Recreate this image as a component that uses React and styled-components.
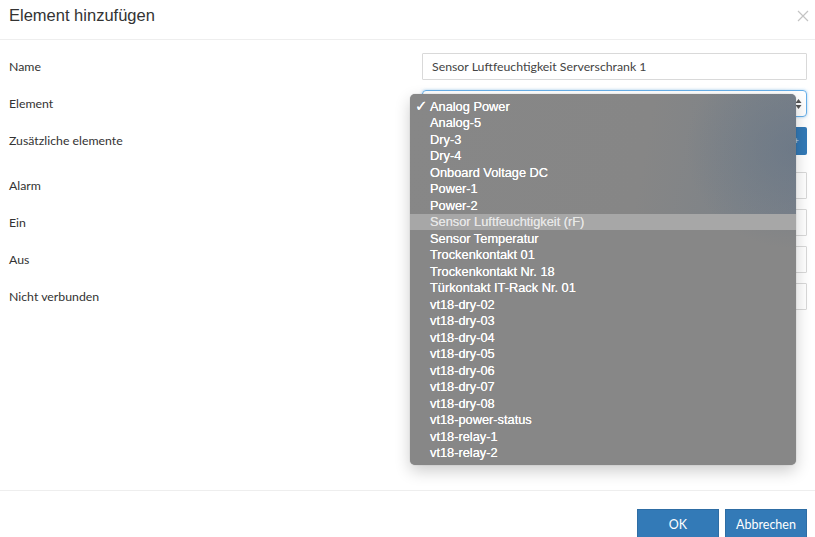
import React from "react";
import styled, { createGlobalStyle } from "styled-components";

const GlobalStyle = createGlobalStyle`
  html, body {
    margin: 0;
    padding: 0;
    background: #fff;
  }
  body {
    font-family: Lato, "Open Sans", sans-serif;
    color: #333;
    overflow: hidden;
  }
`;

const OPTIONS = [
  "Analog Power",
  "Analog-5",
  "Dry-3",
  "Dry-4",
  "Onboard Voltage DC",
  "Power-1",
  "Power-2",
  "Sensor Luftfeuchtigkeit (rF)",
  "Sensor Temperatur",
  "Trockenkontakt 01",
  "Trockenkontakt Nr. 18",
  "Türkontakt IT-Rack Nr. 01",
  "vt18-dry-02",
  "vt18-dry-03",
  "vt18-dry-04",
  "vt18-dry-05",
  "vt18-dry-06",
  "vt18-dry-07",
  "vt18-dry-08",
  "vt18-power-status",
  "vt18-relay-1",
  "vt18-relay-2",
];

const App = () => {
  return (
    <>
      <GlobalStyle />
      <Modal>
        <Header>
          <Title>Element hinzufügen</Title>
          <Close aria-label="close">
            <svg width="12" height="12" viewBox="0 0 12 12">
              <path d="M1 1 L11 11 M11 1 L1 11" stroke="#c4c4c4" strokeWidth="1.2" />
            </svg>
          </Close>
        </Header>

        <Body>
          <Row>
            <Label>Name</Label>
            <Input defaultValue="Sensor Luftfeuchtigkeit Serverschrank 1" />
          </Row>
          <Row>
            <Label>Element</Label>
            <Select $focused>
              <SelectValue>Analog Power</SelectValue>
              <Arrows>
                <svg width="7" height="12" viewBox="0 0 7 12">
                  <path d="M0.5 5 L3.5 1 L6.5 5 Z M0.5 7 L3.5 11 L6.5 7 Z" fill="#555" />
                </svg>
              </Arrows>
            </Select>
          </Row>
          <Row $gap={18}>
            <Label>Zusätzliche elemente</Label>
            <BlueBar>
              <span>+</span>
            </BlueBar>
          </Row>
          <Row>
            <Label>Alarm</Label>
            <Input />
          </Row>
          <Row>
            <Label>Ein</Label>
            <Input />
          </Row>
          <Row>
            <Label>Aus</Label>
            <Input />
          </Row>
          <Row>
            <Label>Nicht verbunden</Label>
            <Input />
          </Row>

          {/* native select popup, drawn open over the form */}
          <Menu>
            {OPTIONS.map((opt, i) => (
              <MenuItem key={opt} $active={i === 7}>
                <Check>{i === 0 ? "✓" : ""}</Check>
                {opt}
              </MenuItem>
            ))}
          </Menu>
        </Body>

        <Footer>
          <Button>OK</Button>
          <Button>Abbrechen</Button>
        </Footer>
      </Modal>
    </>
  );
};

const Modal = styled.div`
  width: 815px;
  height: 537px;
  display: flex;
  flex-direction: column;
  position: relative;
  overflow: hidden;
`;

const Header = styled.div`
  height: 40px;
  box-sizing: border-box;
  border-bottom: 1px solid #eeeeee;
  display: flex;
  align-items: flex-start;
  justify-content: space-between;
  padding: 5px 9px 0 9px;
`;

const Title = styled.h4`
  margin: 0;
  font-family: "Liberation Sans", Arial, sans-serif;
  font-size: 16.5px;
  font-weight: normal;
  line-height: 20px;
  color: #333;
`;

const Close = styled.div`
  margin-top: 1px;
  margin-right: -3px;
  width: 12px;
  height: 12px;
`;

const Body = styled.div`
  flex: 1;
  padding: 13px 8px 0 9px;
  position: relative;
`;

const Row = styled.div`
  display: flex;
  align-items: center;
  justify-content: space-between;
  height: 27px;
  margin-bottom: ${(p) => p.$gap || 10}px;
`;

const Label = styled.label`
  font-size: 12.3px;
  color: #333;
`;

const Input = styled.input`
  width: 385px;
  height: 27px;
  box-sizing: border-box;
  border: 1px solid #d9d9d9;
  border-radius: 1px;
  padding: 0 9px;
  font-family: Lato, "Open Sans", sans-serif;
  font-size: 12.3px;
  color: #444;
  outline: none;
`;

const Select = styled.div`
  width: 385px;
  height: 27px;
  box-sizing: border-box;
  border: 1px solid ${(p) => (p.$focused ? "#66afe9" : "#d9d9d9")};
  border-radius: 4px;
  box-shadow: ${(p) => (p.$focused ? "0 0 3px rgba(102,175,233,0.6)" : "none")};
  display: flex;
  align-items: center;
  justify-content: space-between;
  padding: 0 4px 0 9px;
  font-size: 12.3px;
`;

const SelectValue = styled.span`
  visibility: hidden;
`;

const Arrows = styled.span`
  display: flex;
  align-items: center;
`;

const BlueBar = styled.div`
  width: 385px;
  height: 28px;
  background: #337ab7;
  border-radius: 2px;
  display: flex;
  align-items: center;
  justify-content: flex-end;
  padding-right: 8px;
  box-sizing: border-box;
  color: #cfe0f0;
  font-size: 9px;
`;

const Menu = styled.ul`
  position: absolute;
  left: 410px;
  top: 54px;
  width: 386px;
  height: 371px;
  box-sizing: border-box;
  margin: 0;
  padding: 4px 0;
  list-style: none;
  border-radius: 5px;
  background:
    radial-gradient(ellipse 110px 100px at 386px 55px, rgba(100, 116, 134, 0.6), rgba(100, 116, 134, 0) 100%),
    linear-gradient(100deg, #878787 0%, #868686 60%, #7e8388 85%, #7b8189 100%) top / 100% 120px no-repeat,
    #878787;
  box-shadow: 0 6px 16px rgba(0, 0, 0, 0.2), 0 0 1px rgba(0, 0, 0, 0.35);
`;

const MenuItem = styled.li`
  height: 16.5px;
  display: flex;
  align-items: center;
  font-family: "Liberation Sans", Arial, sans-serif;
  font-size: 12.8px;
  color: ${(p) => (p.$active ? "#e6e6e6" : "#ffffff")};
  background: ${(p) => (p.$active ? "#a7a7a7" : "transparent")};
  white-space: nowrap;
  text-shadow: 0 0 0.4px currentColor;
`;

const Check = styled.span`
  width: 20px;
  padding-left: 5px;
  box-sizing: border-box;
  font-size: 15px;
  font-weight: bold;
  font-family: "DejaVu Sans", sans-serif;
`;

const Footer = styled.div`
  height: 47px;
  box-sizing: border-box;
  border-top: 1px solid #eeeeee;
  display: flex;
  justify-content: flex-end;
  align-items: flex-start;
  gap: 6px;
  padding: 18px 8px 0 0;
`;

const Button = styled.button`
  width: 82px;
  height: 30px;
  border: 1px solid #2e6da4;
  border-radius: 0;
  background: #337ab7;
  color: #fff;
  font-family: Lato, "Open Sans", sans-serif;
  font-size: 12.5px;
  padding: 0;
`;

export default App;
